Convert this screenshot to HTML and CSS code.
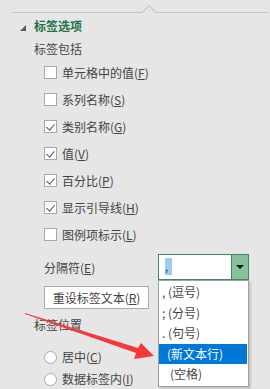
FILE: index.html
```html
<!DOCTYPE html>
<html lang="zh-CN">
<head>
    <meta charset="UTF-8">
    <meta name="viewport" content="width=device-width, initial-scale=1.0">
    <title>标签选项</title>
    <link rel="stylesheet" href="styles.css">
</head>
<body>
<div class="pane">
    <div class="topline"></div>

    <div class="section-head">
        <span class="twisty"></span>
        <span class="section-title">标签选项</span>
    </div>

    <div class="group-label">标签包括</div>

    <div class="opts">
        <label class="opt"><span class="box"></span>单元格中的值(<u>F</u>)</label>
        <label class="opt"><span class="box"></span>系列名称(<u>S</u>)</label>
        <label class="opt"><span class="box checked"></span>类别名称(<u>G</u>)</label>
        <label class="opt"><span class="box checked"></span>值(<u>V</u>)</label>
        <label class="opt"><span class="box checked"></span>百分比(<u>P</u>)</label>
        <label class="opt"><span class="box checked"></span>显示引导线(<u>H</u>)</label>
        <label class="opt"><span class="box"></span>图例项标示(<u>L</u>)</label>
    </div>

    <div class="sep-row">
        <span class="sep-label">分隔符(<u>E</u>)</span>
        <div class="combo">
            <div class="combo-field"><span class="sel">,</span></div>
            <div class="combo-btn"><span class="caret"></span></div>
            <ul class="droplist">
                <li>, (逗号)</li>
                <li>; (分号)</li>
                <li>. (句号)</li>
                <li class="active">(新文本行)</li>
                <li class="pad">(空格)</li>
            </ul>
        </div>
    </div>

    <div class="btn-row">
        <button class="reset">重设标签文本(<u>R</u>)</button>
    </div>

    <div class="group-label pos">标签位置</div>

    <div class="radios">
        <label class="opt short"><span class="radio"></span>居中(<u>C</u>)</label>
        <label class="opt short"><span class="radio"></span>数据标签内(<u>I</u>)</label>
    </div>

    <svg class="pointer" width="270" height="389" viewBox="0 0 270 389">
        <polygon points="25,313 138,348 141,343 154,356 134,359 136,353 25,314" fill="#f43a3a"/>
    </svg>
</div>
</body>
</html>
```

FILE: styles.css
```css
* {
    box-sizing: border-box;
}
body {
    margin: 0;
    background: #e6e6e6;
    font-family: "Noto Sans CJK SC", "Noto Sans", sans-serif;
    font-size: 12px;
    color: #444;
}
u {
    text-underline-offset: 1px;
}
.pane {
    position: relative;
    width: 270px;
    height: 389px;
    overflow: hidden;
}
.topline {
    position: relative;
    margin: 12px 2px 0 12px;
    border-top: 1px solid #c4c4c4;
}
.topline::after {
    content: "";
    position: absolute;
    left: 132px;
    top: -6px;
    width: 9px;
    height: 9px;
    background: #e6e6e6;
    border-left: 1px solid #c4c4c4;
    border-top: 1px solid #c4c4c4;
    transform: rotate(45deg);
}
.section-head {
    display: flex;
    align-items: center;
    height: 26px;
    padding-left: 20px;
}
.twisty {
    width: 0;
    height: 0;
    margin-top: 3px;
    border-left: 6px solid transparent;
    border-bottom: 6px solid #5a5a5a;
}
.section-title {
    margin-left: 8px;
    color: #217346;
    font-weight: bold;
    line-height: 26px;
}
.group-label {
    height: 20px;
    line-height: 20px;
    padding-left: 34px;
}
.group-label.pos {
    height: 32px;
    line-height: 32px;
}
.opt {
    display: flex;
    align-items: center;
    height: 27px;
    padding-left: 44px;
    line-height: 27px;
}
.opt.short {
    height: 22px;
    line-height: 22px;
}
.box {
    position: relative;
    width: 13px;
    height: 13px;
    margin-right: 5px;
    background: #fff;
    border: 1px solid #a8a8a8;
}
.box.checked::after {
    content: "";
    position: absolute;
    left: 3px;
    top: 1px;
    width: 4px;
    height: 7px;
    border-right: 1px solid #555;
    border-bottom: 1px solid #555;
    transform: rotate(40deg);
}
.radio {
    width: 13px;
    height: 13px;
    margin-right: 5px;
    background: #fff;
    border: 1px solid #a8a8a8;
    border-radius: 50%;
}
.radios {
    padding-top: 5px;
}
.sep-row {
    display: flex;
    align-items: center;
    height: 26px;
    margin-top: 6px;
    padding-left: 44px;
}
.sep-label {
    width: 114px;
}
.combo {
    position: relative;
    display: flex;
    width: 91px;
    height: 26px;
    border: 1px solid #3f8a5c;
    background: #fff;
}
.combo-field {
    flex: 1;
    padding: 2px 0 0 6px;
}
.sel {
    display: inline-block;
    width: 7px;
    height: 17px;
    line-height: 17px;
    background: #9fcbee;
    color: #333;
    font-size: 11px;
}
.combo-btn {
    display: flex;
    align-items: center;
    justify-content: center;
    width: 17px;
    background: #88c09c;
    border-left: 1px solid #3f8a5c;
}
.caret {
    width: 0;
    height: 0;
    border-left: 4px solid transparent;
    border-right: 4px solid transparent;
    border-top: 4px solid #111;
}
.droplist {
    position: absolute;
    left: -1px;
    top: 25px;
    width: 91px;
    height: 107px;
    margin: 0;
    padding: 1px 0 0;
    list-style: none;
    background: #fff;
    border: 1px solid #a0a0a0;
    box-shadow: 2px 2px 2px rgba(0, 0, 0, 0.15);
}
.droplist li {
    height: 20.5px;
    line-height: 20.5px;
    padding-left: 3px;
    color: #444;
    white-space: pre;
}
.droplist li.active {
    margin-right: 1px;
    padding-left: 8px;
    background: #0078d7;
    color: #fff;
}
.droplist li.pad {
    padding-left: 11px;
}
.btn-row {
    padding: 6px 0 0 44px;
}
.reset {
    display: block;
    width: 105px;
    height: 23px;
    padding: 0;
    font: inherit;
    color: #444;
    background: #fff;
    border: 1px solid #ababab;
}
.pointer {
    position: absolute;
    left: 0;
    top: 0;
    pointer-events: none;
}
```
